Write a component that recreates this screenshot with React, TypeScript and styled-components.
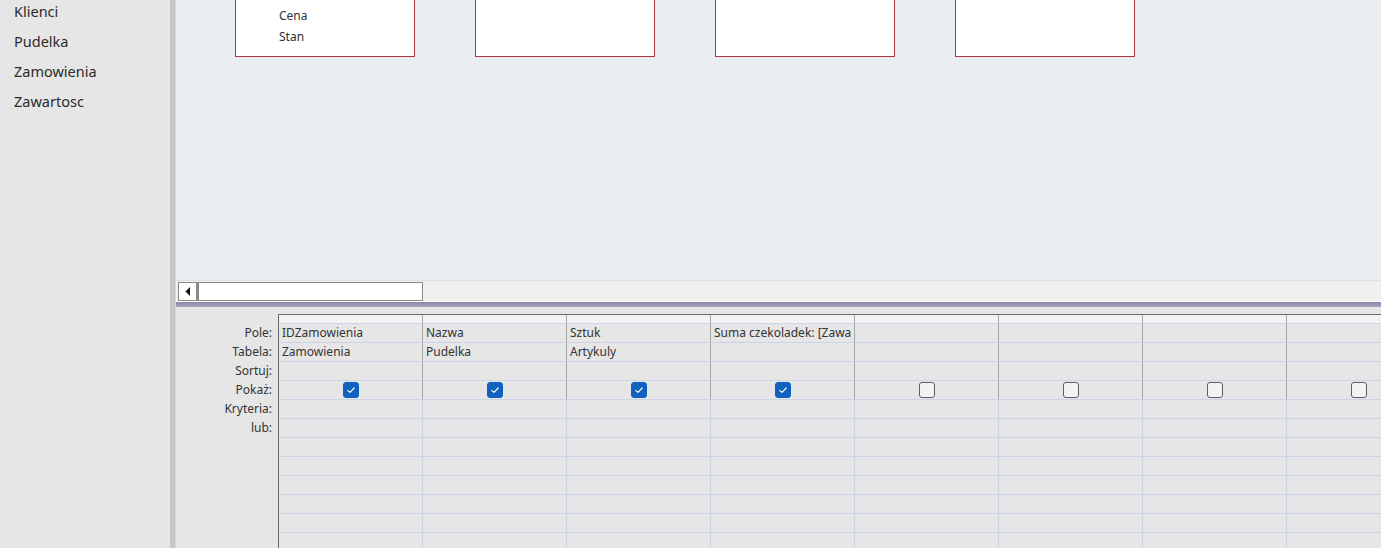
import React from "react";
import styled, { createGlobalStyle } from "styled-components";

const Global = createGlobalStyle`
  html, body { margin: 0; padding: 0; overflow: hidden; }
  body { font-family: "Noto Sans", "Open Sans", sans-serif; color: #333; }
`;

const Shell = styled.div`
  display: flex;
  width: 1381px;
  height: 548px;
  overflow: hidden;
`;

const Nav = styled.nav`
  width: 170px;
  flex: none;
  background: #e6e6e6;
  display: flex;
  flex-direction: column;
`;

const NavItem = styled.div`
  height: 30px;
  line-height: 22px;
  padding-left: 14px;
  font-size: 14.5px;
  color: #2b2b2b;
`;

const Divider = styled.div`
  width: 5px;
  flex: none;
  background: #c6c6c6;
  border-right: 1px solid #d6d6d6;
`;

const Main = styled.div`
  flex: 1;
  min-width: 0;
  display: flex;
  flex-direction: column;
`;

const Design = styled.div`
  height: 280px;
  flex: none;
  background: #e9edf0;
  display: flex;
  align-items: flex-start;
  gap: 60px;
  padding-left: 59px;
  overflow: hidden;
`;

const TableBox = styled.div`
  width: 180px;
  height: 57px;
  flex: none;
  box-sizing: border-box;
  background: #fff;
  border: 1px solid #a8373b;
  border-top: none;
  padding: 5px 0 0 43px;
  display: flex;
  flex-direction: column;
`;

const Field = styled.div`
  height: 21px;
  line-height: 21px;
  font-size: 12px;
  color: #333;
`;

const ScrollRow = styled.div`
  height: 20px;
  flex: none;
  background: #f0f0f0;
  border-top: 1px solid #dde1e4;
  display: flex;
  align-items: flex-end;
  padding-left: 2px;
`;

const ArrowBtn = styled.div`
  width: 19px;
  height: 19px;
  box-sizing: border-box;
  border: 1px solid #8a8a8a;
  background: #fff;
  display: flex;
  align-items: center;
  justify-content: center;
`;

const Thumb = styled.div`
  width: 226px;
  height: 19px;
  box-sizing: border-box;
  border: 1px solid #8a8a8a;
  border-left: 2px solid #8a8a8a;
  background: #fff;
`;

const Splitter = styled.div`
  height: 5px;
  flex: none;
  margin-top: 1px;
  background: linear-gradient(#8a86a4, #aaa7c0);
`;

const Query = styled.div`
  flex: 1;
  min-height: 0;
  background: #e6e6e6;
  padding-top: 7px;
  display: flex;
  overflow: hidden;
`;

const Labels = styled.div`
  width: 102px;
  flex: none;
  padding-top: 9px;
  display: flex;
  flex-direction: column;
`;

const Label = styled.div`
  height: 19px;
  flex: none;
  line-height: 19px;
  text-align: right;
  padding-right: 6px;
  font-size: 12px;
  color: #333;
`;

const Grid = styled.div`
  flex: 1;
  display: flex;
  align-items: flex-start;
  border-top: 1px solid #6a6a6a;
  border-left: 1px solid #6a6a6a;
  overflow: hidden;
`;

const Column = styled.div`
  width: 144px;
  flex: none;
  display: flex;
  flex-direction: column;
`;

const Selector = styled.div`
  height: 8px;
  flex: none;
  background: #f2f2f2;
  border-right: 1px solid #a8a8a8;
  border-bottom: 1px solid #c9d5e6;
`;

const Cell = styled.div<{ $upper: boolean }>`
  height: 18px;
  flex: none;
  line-height: 18px;
  border-bottom: 1px solid #c9d5e6;
  border-right: 1px solid ${(p) => (p.$upper ? "#a8a8a8" : "#c9d5e6")};
  padding-left: 3px;
  font-size: 12px;
  color: #333;
  white-space: nowrap;
  overflow: hidden;
  display: flex;
  align-items: center;
`;

const CheckCell = styled(Cell)`
  justify-content: center;
  padding-left: 0;
`;

const Box = styled.div<{ $on: boolean }>`
  width: 16px;
  height: 16px;
  box-sizing: border-box;
  border-radius: 3px;
  background: ${(p) => (p.$on ? "#0f63bf" : "#f3f3f3")};
  border: 1px solid ${(p) => (p.$on ? "#0f63bf" : "#5e5e5e")};
  display: flex;
  align-items: center;
  justify-content: center;
`;

const Check = () => (
  <svg width="12" height="12" viewBox="0 0 12 12">
    <path d="M2.8 6.6 L5 8.4 L9.2 4" fill="none" stroke="#fff" strokeWidth="1.2" strokeLinecap="round" strokeLinejoin="round" />
  </svg>
);

const columns = [
  { pole: "IDZamowienia", tabela: "Zamowienia", show: true },
  { pole: "Nazwa", tabela: "Pudelka", show: true },
  { pole: "Sztuk", tabela: "Artykuly", show: true },
  { pole: "Suma czekoladek: [Zawa", tabela: "", show: true },
  { pole: "", tabela: "", show: false },
  { pole: "", tabela: "", show: false },
  { pole: "", tabela: "", show: false },
  { pole: "", tabela: "", show: false },
];

const labels = ["Pole:", "Tabela:", "Sortuj:", "Pokaż:", "Kryteria:", "lub:"];
const extraRows = 7;

export default function App() {
  return (
    <>
      <Global />
      <Shell>
        <Nav>
          <NavItem>Klienci</NavItem>
          <NavItem>Pudelka</NavItem>
          <NavItem>Zamowienia</NavItem>
          <NavItem>Zawartosc</NavItem>
        </Nav>
        <Divider />
        <Main>
          <Design>
            <TableBox>
              <Field>Cena</Field>
              <Field>Stan</Field>
            </TableBox>
            <TableBox />
            <TableBox />
            <TableBox />
          </Design>
          <ScrollRow>
            <ArrowBtn>
              <svg width="6" height="9" viewBox="0 0 6 9">
                <path d="M5 0 L5 9 L0.5 4.5 Z" fill="#111" />
              </svg>
            </ArrowBtn>
            <Thumb />
          </ScrollRow>
          <Splitter />
          <Query>
            <Labels>
              {labels.map((l) => (
                <Label key={l}>{l}</Label>
              ))}
            </Labels>
            <Grid>
              {columns.map((c, i) => (
                <Column key={i}>
                  <Selector />
                  <Cell $upper>{c.pole}</Cell>
                  <Cell $upper>{c.tabela}</Cell>
                  <Cell $upper />
                  <CheckCell $upper>
                    <Box $on={c.show}>{c.show && <Check />}</Box>
                  </CheckCell>
                  <Cell $upper={false} />
                  <Cell $upper={false} />
                  {Array.from({ length: extraRows }).map((_, r) => (
                    <Cell key={r} $upper={false} />
                  ))}
                </Column>
              ))}
            </Grid>
          </Query>
        </Main>
      </Shell>
    </>
  );
}
